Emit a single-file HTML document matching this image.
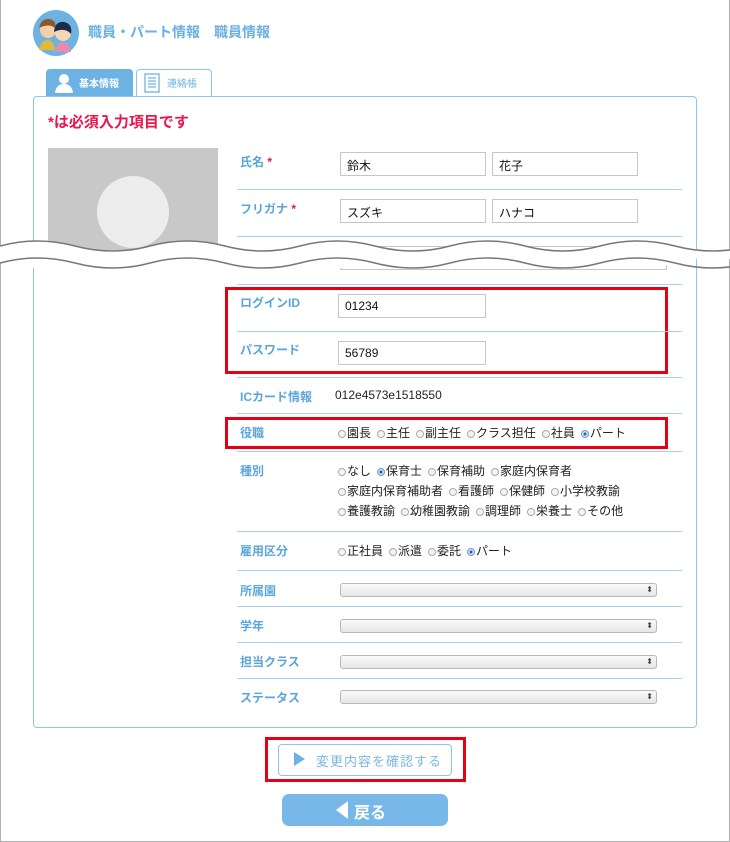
<!DOCTYPE html>
<html><head><meta charset="utf-8"><style>
*{box-sizing:border-box;margin:0;padding:0}
body{width:730px;height:842px;position:relative;background:#fff;font-family:"Liberation Sans","Noto Sans CJK JP",sans-serif;overflow:hidden}
.frame{position:absolute;left:0;top:0;width:730px;height:842px;border:1px solid #b0b0b0;border-top:none}
.a{position:absolute}
.lbl{position:absolute;left:240px;font-size:12px;font-weight:bold;color:#5aa6dc}
.ln{position:absolute;left:237px;width:445px;height:1px;background:#a9d2f0}
.inp{position:absolute;border:1px solid #c6c6c6;background:#fff;font-size:12px;padding:4px 6px;color:#111}
.rd{position:absolute;left:338px;font-size:12px;color:#222;white-space:nowrap}
.r{display:inline-block;width:8px;height:8px;border:1px solid #aaa;border-radius:50%;background:#f3f3f3;margin:0 1px 0 6px;vertical-align:-1px}
.r.f{margin-left:0}
.r.on{background:radial-gradient(#2a5fa8 30%,#cfe3f7 40%);border-color:#6a9ad0}
.sel{position:absolute;left:340px;width:317px;height:14px;border:1px solid #b8b8b8;border-radius:3px;background:linear-gradient(#fafafa,#e6e6e6)}
.sel:after{content:"\2B0D";position:absolute;right:3px;top:0px;font-size:8px;line-height:12px;color:#444}
.red{position:absolute;border:3px solid #e60012}
</style></head><body>
<div class="frame"></div>
<svg class="a" style="left:33px;top:10px" width="46" height="46" viewBox="0 0 46 46">
<circle cx="23" cy="23" r="23" fill="#6cb3e4"/>
<circle cx="15" cy="20" r="8" fill="#f5cfa6"/><path d="M6 18 Q8 8 17 9 Q24 11 22 18 Q16 13 6 18Z" fill="#8a5a2b"/>
<circle cx="30" cy="23" r="8" fill="#f7d6b5"/><path d="M21 22 Q22 11 31 12 Q40 14 38 24 Q32 17 21 22Z" fill="#1d2b4a"/>
<path d="M6 40 Q8 30 15 30 Q21 31 22 40Z" fill="#e2b93a"/><path d="M22 42 Q24 32 30 32 Q37 33 38 42Z" fill="#e88bb0"/>
</svg>
<div class="a" style="left:88px;top:22px;font-size:14px;font-weight:bold;color:#6ab0e0">職員・パート情報　職員情報</div>
<div class="a" style="left:46px;top:69px;width:87px;height:28px;background:#6cb3e4;border-radius:4px 4px 0 0"></div>
<svg class="a" style="left:55px;top:73px" width="18" height="20" viewBox="0 0 18 20"><circle cx="9" cy="6" r="5" fill="#fff"/><path d="M0 20 Q1 11 9 11 Q17 11 18 20Z" fill="#fff"/></svg>
<div class="a" style="left:79px;top:75px;font-size:10px;font-weight:bold;color:#fff">基本情報</div>
<div class="a" style="left:136px;top:69px;width:76px;height:28px;border:1px solid #8cc4ec;border-bottom:none;border-radius:4px 4px 0 0;background:#fff"></div>
<svg class="a" style="left:143px;top:73px" width="18" height="20" viewBox="0 0 18 20"><rect x="2" y="1" width="14" height="18" fill="none" stroke="#6cb3e4" stroke-width="1.3"/><path d="M5 5h8M5 8h8M5 11h8M5 14h8" stroke="#6cb3e4" stroke-width="1.2"/></svg>
<div class="a" style="left:167px;top:75px;font-size:10px;color:#6cb3e4">連絡帳</div>
<div class="a" style="left:33px;top:96px;width:664px;height:632px;border:1px solid #8cc4ec;border-radius:4px"></div>
<div class="a" style="left:48px;top:111px;font-size:15px;font-weight:bold;color:#e8174d">*は必須入力項目です</div>
<div class="a" style="left:48px;top:148px;width:170px;height:102px;background:#c8c8c8;overflow:hidden"><div class="a" style="left:49px;top:28px;width:72px;height:72px;border-radius:50%;background:#ededed"></div></div>
<div class="lbl" style="top:153px">氏名 <span style="color:#e8174d">*</span></div>
<div class="inp" style="left:340px;top:152px;width:146px;height:24px">鈴木</div>
<div class="inp" style="left:492px;top:152px;width:146px;height:24px">花子</div>
<div class="ln" style="top:189px"></div>
<div class="lbl" style="top:200px">フリガナ <span style="color:#e8174d">*</span></div>
<div class="inp" style="left:340px;top:199px;width:146px;height:24px">スズキ</div>
<div class="inp" style="left:492px;top:199px;width:146px;height:24px">ハナコ</div>
<div class="ln" style="top:236px"></div>
<div class="a" style="left:340px;top:246px;width:327px;height:24px;border:1px solid #c6c6c6"></div>
<svg class="a" style="left:0;top:236px" width="730" height="34" viewBox="0 0 730 34">
<path d="M0 10 Q37 0 75 10 T150 10 T225 10 T300 10 T375 10 T450 10 T525 10 T600 10 T675 10 T750 10 L750 27 Q712 17 675 27 T600 27 T525 27 T450 27 T375 27 T300 27 T225 27 T150 27 T75 27 T0 27Z" fill="#fff"/>
<path d="M0 10 Q37 0 75 10 T150 10 T225 10 T300 10 T375 10 T450 10 T525 10 T600 10 T675 10 T750 10" fill="none" stroke="#777" stroke-width="1.5"/>
<path d="M0 27 Q37 17 75 27 T150 27 T225 27 T300 27 T375 27 T450 27 T525 27 T600 27 T675 27 T750 27" fill="none" stroke="#777" stroke-width="1.5"/>
</svg>
<div class="ln" style="top:284px"></div>
<div class="red" style="left:225px;top:287px;width:443px;height:87px"></div>
<div class="lbl" style="top:294px">ログインID</div>
<div class="inp" style="left:338px;top:294px;width:148px;height:24px">01234</div>
<div class="ln" style="top:331px"></div>
<div class="lbl" style="top:341px">パスワード</div>
<div class="inp" style="left:338px;top:341px;width:148px;height:24px">56789</div>
<div class="ln" style="top:377px"></div>
<div class="lbl" style="top:388px">ICカード情報</div>
<div class="a" style="left:335px;top:388px;font-size:12px;color:#222">012e4573e1518550</div>
<div class="ln" style="top:413px"></div>
<div class="red" style="left:225px;top:417px;width:443px;height:32px"></div>
<div class="lbl" style="top:424px">役職</div>
<div class="rd" style="top:424px"><span class="r f"></span>園長<span class="r"></span>主任<span class="r"></span>副主任<span class="r"></span>クラス担任<span class="r"></span>社員<span class="r on"></span>パート</div>
<div class="ln" style="top:451px"></div>
<div class="lbl" style="top:462px">種別</div>
<div class="rd" style="top:462px"><span class="r f"></span>なし<span class="r on"></span>保育士<span class="r"></span>保育補助<span class="r"></span>家庭内保育者</div>
<div class="rd" style="top:482px"><span class="r f"></span>家庭内保育補助者<span class="r"></span>看護師<span class="r"></span>保健師<span class="r"></span>小学校教諭</div>
<div class="rd" style="top:502px"><span class="r f"></span>養護教諭<span class="r"></span>幼稚園教諭<span class="r"></span>調理師<span class="r"></span>栄養士<span class="r"></span>その他</div>
<div class="ln" style="top:531px"></div>
<div class="lbl" style="top:542px">雇用区分</div>
<div class="rd" style="top:542px"><span class="r f"></span>正社員<span class="r"></span>派遣<span class="r"></span>委託<span class="r on"></span>パート</div>
<div class="ln" style="top:570px"></div>
<div class="lbl" style="top:582px">所属園</div><div class="sel" style="top:583px"></div>
<div class="ln" style="top:606px"></div>
<div class="lbl" style="top:617px">学年</div><div class="sel" style="top:619px"></div>
<div class="ln" style="top:642px"></div>
<div class="lbl" style="top:653px">担当クラス</div><div class="sel" style="top:655px"></div>
<div class="ln" style="top:678px"></div>
<div class="lbl" style="top:689px">ステータス</div><div class="sel" style="top:690px"></div>
<div class="red" style="left:265px;top:737px;width:201px;height:45px"></div>
<div class="a" style="left:278px;top:744px;width:174px;height:32px;border:1.5px solid #8cc4ec;border-radius:4px"></div>
<div class="a" style="left:294px;top:752px;width:0;height:0;border-left:11px solid #6cb3e4;border-top:7px solid transparent;border-bottom:7px solid transparent"></div>
<div class="a" style="left:316px;top:751px;font-size:13px;color:#7ab8e4;letter-spacing:1px">変更内容を確認する</div>
<div class="a" style="left:282px;top:794px;width:166px;height:32px;background:#78b8e8;border-radius:7px"></div>
<div class="a" style="left:336px;top:801px;width:0;height:0;border-right:12px solid #fff;border-top:9px solid transparent;border-bottom:9px solid transparent"></div>
<div class="a" style="left:354px;top:799px;font-size:16px;font-weight:bold;color:#fff">戻る</div>
</body></html>
